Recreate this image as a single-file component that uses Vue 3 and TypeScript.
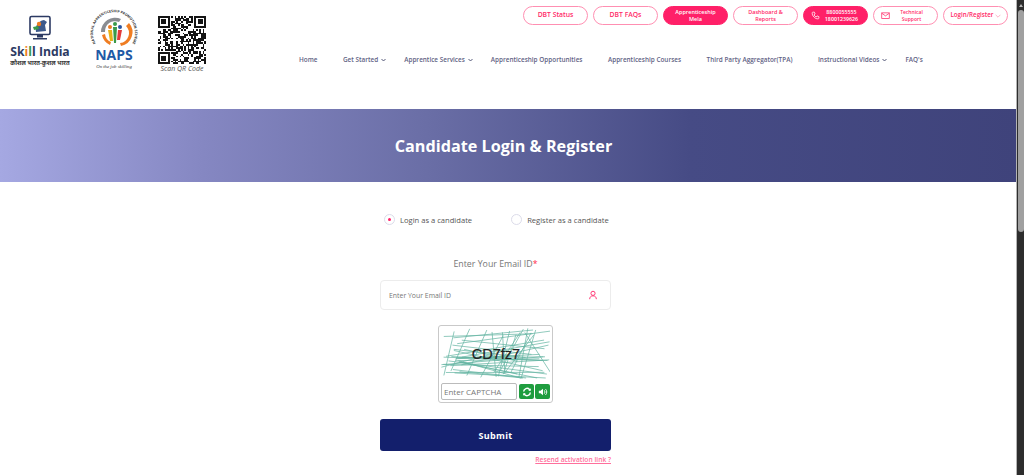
<script setup lang="ts">
function prng(seed: number) {
  let s = seed;
  return () => {
    s = (s * 1664525 + 1013904223) % 4294967296;
    return s / 4294967296;
  };
}

const topButtons = [
  { label: ['DBT Status'], filled: false },
  { label: ['DBT FAQs'], filled: false },
  { label: ['Apprenticeship', 'Mela'], filled: true },
  { label: ['Dashboard &', 'Reports'], filled: false },
];

const navItems = [
  { label: 'Home', caret: false },
  { label: 'Get Started', caret: true },
  { label: 'Apprentice Services', caret: true },
  { label: 'Apprenticeship Opportunities', caret: false },
  { label: 'Apprenticeship Courses', caret: false },
  { label: 'Third Party Aggregator(TPA)', caret: false },
  { label: 'Instructional Videos', caret: true },
  { label: "FAQ's", caret: false },
];

const qrSize = 29;
function inFinder(x: number, y: number) {
  const corner = (a: number, b: number) => x >= a - 1 && x <= a + 7 && y >= b - 1 && y <= b + 7;
  return corner(0, 0) || corner(qrSize - 7, 0) || corner(0, qrSize - 7);
}
const rq = prng(77);
let qrD = '';
for (let y = 0; y < qrSize; y++) {
  for (let x = 0; x < qrSize; x++) {
    const on = rq() > 0.5;
    if (on && !inFinder(x, y)) qrD += `M${x} ${y}h1v1h-1z`;
  }
}
const finders = [
  [0, 0],
  [qrSize - 7, 0],
  [0, qrSize - 7],
];

const rc = prng(4242);
const captchaLines = Array.from({ length: 44 }, (_, i) => {
  const steep = i % 3 === 0;
  const x1 = steep ? 12 + rc() * 85 : rc() * 24;
  const y1 = steep ? rc() * 8 : 6 + rc() * 40;
  const x2 = steep ? x1 + (rc() - 0.5) * 60 : 72 + rc() * 37;
  const y2 = steep ? 42 + rc() * 10 : Math.min(50, Math.max(2, y1 + (rc() - 0.5) * 44));
  return { x1, y1, x2, y2 };
});
</script>

<template>
  <div class="page">
    <div class="content">
      <header class="header">
        <div class="logos">
          <svg class="skill" viewBox="0 0 62 54" width="62" height="54">
            <rect x="21" y="1.5" width="20" height="18" rx="1.5" fill="#fff" stroke="#2c3a63" stroke-width="1.6" />
            <path d="M27 17c-1-6 2-11 8-12l3 2-2 3 1 6z" fill="#3d5a8c" />
            <circle cx="30" cy="9" r="2.2" fill="#ef7d22" />
            <path d="M24 12l5-1 1 3-5 1z" fill="#3a9a4a" />
            <path d="M28 19.500h6v3h-6zM24 23h14v1.500H24z" fill="#2c3a63" />
            <text x="31" y="41" text-anchor="middle" class="skill-name">Sk<tspan fill="#ef7d22">i</tspan><tspan fill="#3a9a4a">l</tspan>l India</text>
            <text x="31" y="50" text-anchor="middle" class="skill-hindi">कौशल भारत-कुशल भारत</text>
          </svg>
          <svg class="naps" viewBox="0 0 54 63" width="54" height="63">
            <defs>
              <path id="naps-arc" d="M9 36A21 21 0 1 1 45 36" />
            </defs>
            <text class="naps-ring"><textPath href="#naps-arc" startOffset="50%" text-anchor="middle">NATIONAL APPRENTICESHIP PROMOTION SCHEME</textPath></text>
            <g transform="translate(1 -6)">
              <path d="M13 30a14 14 0 0 1 20-13l-2 3a10 10 0 0 0-14 10z" fill="#8a8d92" />
              <path d="M41 21a14 14 0 0 1-8 23l-1-3a10 10 0 0 0 6-17z" fill="#ef7d22" />
              <path d="M14 33a14 14 0 0 0 8 10l1-3a10 10 0 0 1-6-8z" fill="#ef7d22" />
              <circle cx="22" cy="25" r="2" fill="#ef7d22" />
              <circle cx="27" cy="22" r="2" fill="#3a9a4a" />
              <circle cx="32" cy="25" r="2" fill="#2b55a0" />
              <path d="M20 28h4l1 11h-3z" fill="#e8b21a" />
              <path d="M25 25h4l-1 16h-2z" fill="#3a9a4a" />
              <path d="M30 28h4l-2 10h-3z" fill="#e23b3b" />
            </g>
            <text x="27" y="52" text-anchor="middle" class="naps-name">NAPS</text>
            <text x="27" y="59.500" text-anchor="middle" class="naps-tag">On the job skilling</text>
          </svg>
          <div class="qr">
            <svg :viewBox="`0 0 ${qrSize} ${qrSize}`" width="48" height="48" shape-rendering="crispEdges">
              <path :d="qrD" fill="#151515" />
              <g v-for="f in finders" :key="f[0] + '-' + f[1]">
                <path :d="`M${f[0]} ${f[1]}h7v7h-7zM${f[0] + 1} ${f[1] + 1}v5h5v-5z`" fill="#151515" fill-rule="evenodd" />
                <rect :x="f[0] + 2" :y="f[1] + 2" width="3" height="3" fill="#151515" />
              </g>
            </svg>
            <span class="qr-caption">Scan QR Code</span>
          </div>
        </div>

        <div class="header-right">
          <div class="top-buttons">
            <button
              v-for="b in topButtons"
              :key="b.label[0]"
              class="pill"
              :class="{ filled: b.filled, double: b.label.length > 1 }"
            >
              <span v-for="line in b.label" :key="line">{{ line }}</span>
            </button>
            <button class="pill filled with-icon">
              <svg viewBox="0 0 24 24" width="9" height="9" fill="none" stroke="#fff" stroke-width="2">
                <path d="M5 3h4l2 5-3 2c1 3 3 5 6 6l2-3 5 2v4c0 1-1 2-2 2C10 21 3 13 3 5c0-1 1-2 2-2z" />
              </svg>
              <span class="stack numbers"><span>8800055555</span><span>18001239626</span></span>
            </button>
            <button class="pill with-icon">
              <svg viewBox="0 0 24 24" width="9" height="9" fill="none" stroke="#ff2a68" stroke-width="2">
                <rect x="2" y="5" width="20" height="15" />
                <path d="M2 6l10 7 10-7" />
              </svg>
              <span class="stack tech"><span>Technical</span><span>Support</span></span>
            </button>
            <button class="pill login">
              Login/Register
              <svg viewBox="0 0 10 6" width="6" height="4" fill="none" stroke="#ff7fa6" stroke-width="1">
                <path d="M1 1l4 4 4-4" />
              </svg>
            </button>
          </div>
          <nav class="nav">
            <a v-for="n in navItems" :key="n.label" class="nav-item" :class="{ caret: n.caret }">
              {{ n.label }}
              <svg v-if="n.caret" viewBox="0 0 10 6" width="5" height="4" fill="none" stroke="#44476b" stroke-width="1.800">
                <path d="M1 1l4 4 4-4" />
              </svg>
            </a>
          </nav>
        </div>
      </header>

      <section class="banner">
        <h1>Candidate Login &amp; Register</h1>
      </section>

      <main class="main">
        <div class="radios">
          <label class="radio"><span class="dot on"></span>Login as a candidate</label>
          <label class="radio"><span class="dot"></span>Register as a candidate</label>
        </div>

        <div class="field-label">Enter Your Email ID<span class="star">*</span></div>

        <div class="input">
          <span>Enter Your Email ID</span>
          <svg viewBox="0 0 24 24" width="10" height="10" fill="none" stroke="#ff3d78" stroke-width="2.400">
            <circle cx="12" cy="8" r="5" />
            <path d="M4 22c0-5 3-8 8-8s8 3 8 8" />
          </svg>
        </div>

        <div class="captcha">
          <div class="captcha-img">
            <svg viewBox="0 0 109 52" width="109" height="52">
              <line
                v-for="(l, i) in captchaLines"
                :key="i"
                :x1="l.x1"
                :y1="l.y1"
                :x2="l.x2"
                :y2="l.y2"
                stroke="#62b3a1"
                stroke-width="0.700"
              />
            </svg>
            <span class="captcha-text">CD7fz7</span>
          </div>
          <div class="captcha-row">
            <div class="captcha-input">Enter CAPTCHA</div>
            <button class="green">
              <svg viewBox="0 0 24 24" width="10" height="10" fill="none" stroke="#fff" stroke-width="3.500">
                <path d="M4 11a8 8 0 0 1 14-5l2 2M20 13a8 8 0 0 1-14 5l-2-2" />
                <path d="M21 3v6h-6zM3 21v-6h6z" fill="#fff" stroke="none" />
              </svg>
            </button>
            <button class="green">
              <svg viewBox="0 0 24 24" width="10" height="10" fill="#fff">
                <path d="M2 9h4l6-5v16l-6-5H2z" />
                <path d="M15 8c2 2 2 6 0 8M18 5c4 4 4 10 0 14" fill="none" stroke="#fff" stroke-width="2.200" />
              </svg>
            </button>
          </div>
        </div>

        <button class="submit">Submit</button>
        <a class="resend">Resend activation link ?</a>
      </main>
    </div>

    <div class="scrollbar">
      <span class="arrow"></span>
      <span class="thumb"></span>
    </div>
  </div>
</template>

<style>
html,
body {
  margin: 0;
  padding: 0;
  overflow: hidden;
  background: #fff;
}
</style>

<style scoped>
.page {
  display: flex;
  width: 1024px;
  height: 475px;
  overflow: hidden;
  font-family: "Open Sans", "Noto Sans", sans-serif;
}
.content {
  flex: 1;
  min-width: 0;
  background: #fff;
}
.scrollbar {
  width: 8px;
  background: #2d2d2d;
  border-left: 1px solid #b4b4b4;
  box-sizing: border-box;
  display: flex;
  flex-direction: column;
  align-items: center;
}
.arrow {
  width: 0;
  height: 0;
  margin-top: 4px;
  border-left: 2.500px solid transparent;
  border-right: 2.500px solid transparent;
  border-bottom: 3px solid #b5b5b5;
}
.thumb {
  width: 6px;
  height: 222px;
  margin-top: 3px;
  border-radius: 3px;
  background: #a0a0a0;
}

.header {
  display: flex;
  height: 109px;
}
.logos {
  width: 299px;
  flex: none;
  display: flex;
  align-items: flex-start;
  padding: 8px 0 0 9px;
  box-sizing: border-box;
}
.skill {
  margin-top: 7px;
}
.skill-name {
  font: 700 12.200px "Open Sans", sans-serif;
  fill: #2c3a63;
}
.skill-hindi {
  font: 700 5.900px "Noto Sans", "Noto Sans CJK SC", sans-serif;
  fill: #333;
}
.naps {
  margin-left: 16px;
}
.naps-ring {
  font: 700 3.500px "Open Sans", sans-serif;
  fill: #333;
}
.naps-name {
  font: 700 14px "Open Sans", sans-serif;
  fill: #1f5aa6;
}
.naps-tag {
  font: italic 4.800px "Liberation Serif", serif;
  fill: #333;
}
.qr {
  margin: 8px 0 0 17px;
  display: flex;
  flex-direction: column;
  align-items: center;
}
.qr-caption {
  margin-top: 0;
  font: italic 7px/9px "Open Sans", sans-serif;
  color: #555;
  white-space: nowrap;
}

.header-right {
  flex: 1;
  min-width: 0;
  padding-top: 6px;
}
.top-buttons {
  display: flex;
  justify-content: flex-end;
  gap: 5px;
  padding-right: 8px;
}
.pill {
  width: 65px;
  height: 19px;
  padding: 0;
  box-sizing: border-box;
  border: 1px solid #ff8fb2;
  border-radius: 10px;
  background: #fff;
  color: #ff2a68;
  font: 600 6.800px/6.500px "Open Sans", sans-serif;
  display: flex;
  flex-direction: column;
  align-items: center;
  justify-content: center;
}
.pill.double {
  font-size: 5.500px;
}
.pill.filled {
  background: #ff2068;
  border-color: #ff2068;
  color: #fff;
}
.pill.with-icon {
  flex-direction: row;
  justify-content: flex-start;
  padding-left: 7px;
}
.pill.login {
  flex-direction: row;
  gap: 1px;
  font-size: 6.200px;
}
.stack {
  flex: 1;
  display: flex;
  flex-direction: column;
  align-items: center;
  padding-right: 4px;
}
.numbers {
  font-size: 5.300px;
}
.tech {
  font-size: 5px;
}
.nav {
  display: flex;
  gap: 25.500px;
  margin-top: 30px;
}
.nav-item {
  display: flex;
  align-items: center;
  gap: 3px;
  color: #5f6284;
  font-size: 6.400px;
  font-weight: 600;
  line-height: 10px;
  white-space: nowrap;
}
.nav-item.caret {
  margin-right: -7.500px;
}

.banner {
  height: 73px;
  display: flex;
  align-items: center;
  justify-content: center;
  padding-right: 9px;
  box-sizing: border-box;
  background: linear-gradient(90deg, #a5a8e2 0%, #8587c2 20%, #6a6ea6 42%, #464b85 68%, #3f437b 100%);
}
.banner h1 {
  margin: 0;
  color: #fff;
  font-size: 16.200px;
  font-weight: 700;
}

.main {
  width: 231px;
  margin-left: 380px;
  display: flex;
  flex-direction: column;
  align-items: stretch;
}
.radios {
  display: flex;
  margin-top: 32px;
  height: 11px;
  white-space: nowrap;
}
.radio {
  display: flex;
  align-items: center;
  gap: 5px;
  color: #555;
  font-size: 7.600px;
}
.radio:first-child {
  margin: 0 39px 0 4px;
}
.dot {
  width: 11px;
  height: 11px;
  box-sizing: border-box;
  border: 1px solid #dcdcea;
  border-radius: 50%;
  display: flex;
  align-items: center;
  justify-content: center;
}
.dot.on::after {
  content: "";
  width: 3px;
  height: 3px;
  border-radius: 50%;
  background: #ff2068;
}
.field-label {
  margin-top: 32px;
  text-align: center;
  color: #777;
  font-size: 8.800px;
  line-height: 14px;
}
.star {
  color: #ff2a4a;
}
.input {
  margin-top: 9px;
  height: 30px;
  box-sizing: border-box;
  padding: 0 12px 0 8px;
  border: 1px solid #ececec;
  border-radius: 4px;
  display: flex;
  align-items: center;
  justify-content: space-between;
  color: #777;
  font-size: 6.900px;
}
.captcha {
  align-self: flex-start;
  margin: 15px 0 0 58px;
  width: 115px;
  height: 78px;
  box-sizing: border-box;
  padding: 2px;
  border: 1px solid #c9c9c9;
  border-radius: 3px;
}
.captcha-img {
  position: relative;
  height: 52px;
  display: flex;
  align-items: center;
  justify-content: center;
}
.captcha-img svg {
  position: absolute;
  inset: 0;
}
.captcha-text {
  position: relative;
  font: 14.500px "Liberation Sans", sans-serif;
  color: #222;
  -webkit-text-stroke: 0.2px #222;
  margin-left: 1px;
}
.captcha-row {
  display: flex;
  gap: 1px;
  margin-top: 3px;
}
.captcha-input {
  width: 77px;
  height: 17px;
  margin-right: 1px;
  box-sizing: border-box;
  padding-left: 2px;
  border: 1px solid #bbb;
  border-radius: 2px;
  color: #777;
  font: 8px/15px "Open Sans", sans-serif;
}
.green {
  width: 15px;
  height: 15px;
  margin-top: 1px;
  padding: 0;
  border: none;
  border-radius: 2px;
  background: #1f9d3f;
  display: flex;
  align-items: center;
  justify-content: center;
}
.submit {
  margin-top: 16px;
  height: 32px;
  border: none;
  border-radius: 3px;
  background: #131f6c;
  color: #fff;
  font: 700 9px "Open Sans", sans-serif;
  letter-spacing: 0.3px;
}
.resend {
  margin-top: 4px;
  align-self: flex-end;
  color: #ff6f9c;
  font-size: 6.700px;
  line-height: 10px;
  font-weight: 600;
  text-decoration: underline;
}
</style>
